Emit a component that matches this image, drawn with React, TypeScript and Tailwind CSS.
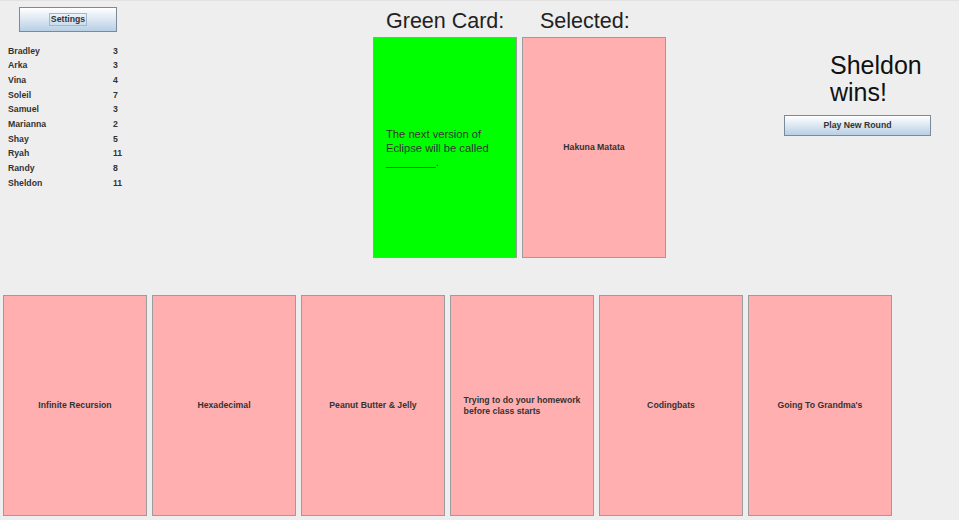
import React from "react";

const scores: [string, string][] = [
  ["Bradley", "3"],
  ["Arka", "3"],
  ["Vina", "4"],
  ["Soleil", "7"],
  ["Samuel", "3"],
  ["Marianna", "2"],
  ["Shay", "5"],
  ["Ryah", "11"],
  ["Randy", "8"],
  ["Sheldon", "11"],
];

function Card({ children, green }: { children: React.ReactNode; green?: boolean }) {
  return (
    <div
      className={
        "w-[144px] h-[221px] shrink-0 border border-[#9c9c9c] flex items-center " +
        (green ? "bg-[#00ff00]" : "bg-[#ffafaf] justify-center")
      }
    >
      {children}
    </div>
  );
}

function BoldLabel({ children }: { children: React.ReactNode }) {
  return (
    <div className="pt-[1px] text-[8.7px] font-bold text-[#333333] leading-[11.5px] text-left">{children}</div>
  );
}

export default function App() {
  return (
    <div
      className="w-[959px] h-[520px] bg-[#eeeeee] border-t border-[#e2e2e2] flex flex-col overflow-hidden text-[#333333]"
      style={{ fontFamily: '"Liberation Sans", Arial, sans-serif' }}
    >
      <div className="flex h-[294px]">
        {/* Left column */}
        <div className="w-[373px] flex flex-col">
          <button className="ml-[19px] mt-[6px] w-[98px] h-[25px] border border-[#7a8a99] bg-gradient-to-b from-[#ffffff] to-[#b8cfe5] flex items-center justify-center">
            <span className="border border-[#a3b8cc] px-[1px] h-[13px] flex items-center text-[8.7px] font-bold text-[#333333]">
              Settings
            </span>
          </button>
          <div className="mt-[11.8px] pl-[8px] flex flex-col">
            {scores.map(([name, score]) => (
              <div key={name} className="flex h-[14.67px] leading-[14.67px] text-[8.7px] font-bold">
                <span className="w-[105px]">{name}</span>
                <span>{score}</span>
              </div>
            ))}
          </div>
        </div>

        {/* Center column */}
        <div className="w-[293px] flex flex-col">
          <div className="h-[36px] flex pt-[10px] text-[21.5px] leading-[21.5px] text-[#222222]">
            <div className="w-[149px] pl-[13px]">Green Card:</div>
            <div className="pl-[18px]">Selected:</div>
          </div>
          <div className="flex gap-[5px]">
            <Card green>
              <div className="pl-[12px] text-[11.2px] leading-[14px] text-[#333333]">
                The next version of
                <br />
                Eclipse will be called
                <br />
                ________.
              </div>
            </Card>
            <Card>
              <BoldLabel>Hakuna Matata</BoldLabel>
            </Card>
          </div>
        </div>

        {/* Right column */}
        <div className="flex-1 flex flex-col">
          <div className="ml-[164px] mt-[51px] text-[25px] leading-[27px] text-[#111111]">
            Sheldon
            <br />
            wins!
          </div>
          <button className="ml-[118px] mt-[9px] w-[147px] h-[21px] border border-[#7a8a99] bg-gradient-to-b from-[#ffffff] to-[#b8cfe5] flex items-center justify-center">
            <span className="text-[8.7px] font-bold text-[#333333]">Play New Round</span>
          </button>
        </div>
      </div>

      {/* Hand */}
      <div className="flex gap-[5px] pl-[3px]">
        <Card>
          <BoldLabel>Infinite Recursion</BoldLabel>
        </Card>
        <Card>
          <BoldLabel>Hexadecimal</BoldLabel>
        </Card>
        <Card>
          <BoldLabel>Peanut Butter &amp; Jelly</BoldLabel>
        </Card>
        <Card>
          <BoldLabel>
            Trying to do your homework
            <br />
            before class starts
          </BoldLabel>
        </Card>
        <Card>
          <BoldLabel>Codingbats</BoldLabel>
        </Card>
        <Card>
          <BoldLabel>Going To Grandma's</BoldLabel>
        </Card>
      </div>
    </div>
  );
}
